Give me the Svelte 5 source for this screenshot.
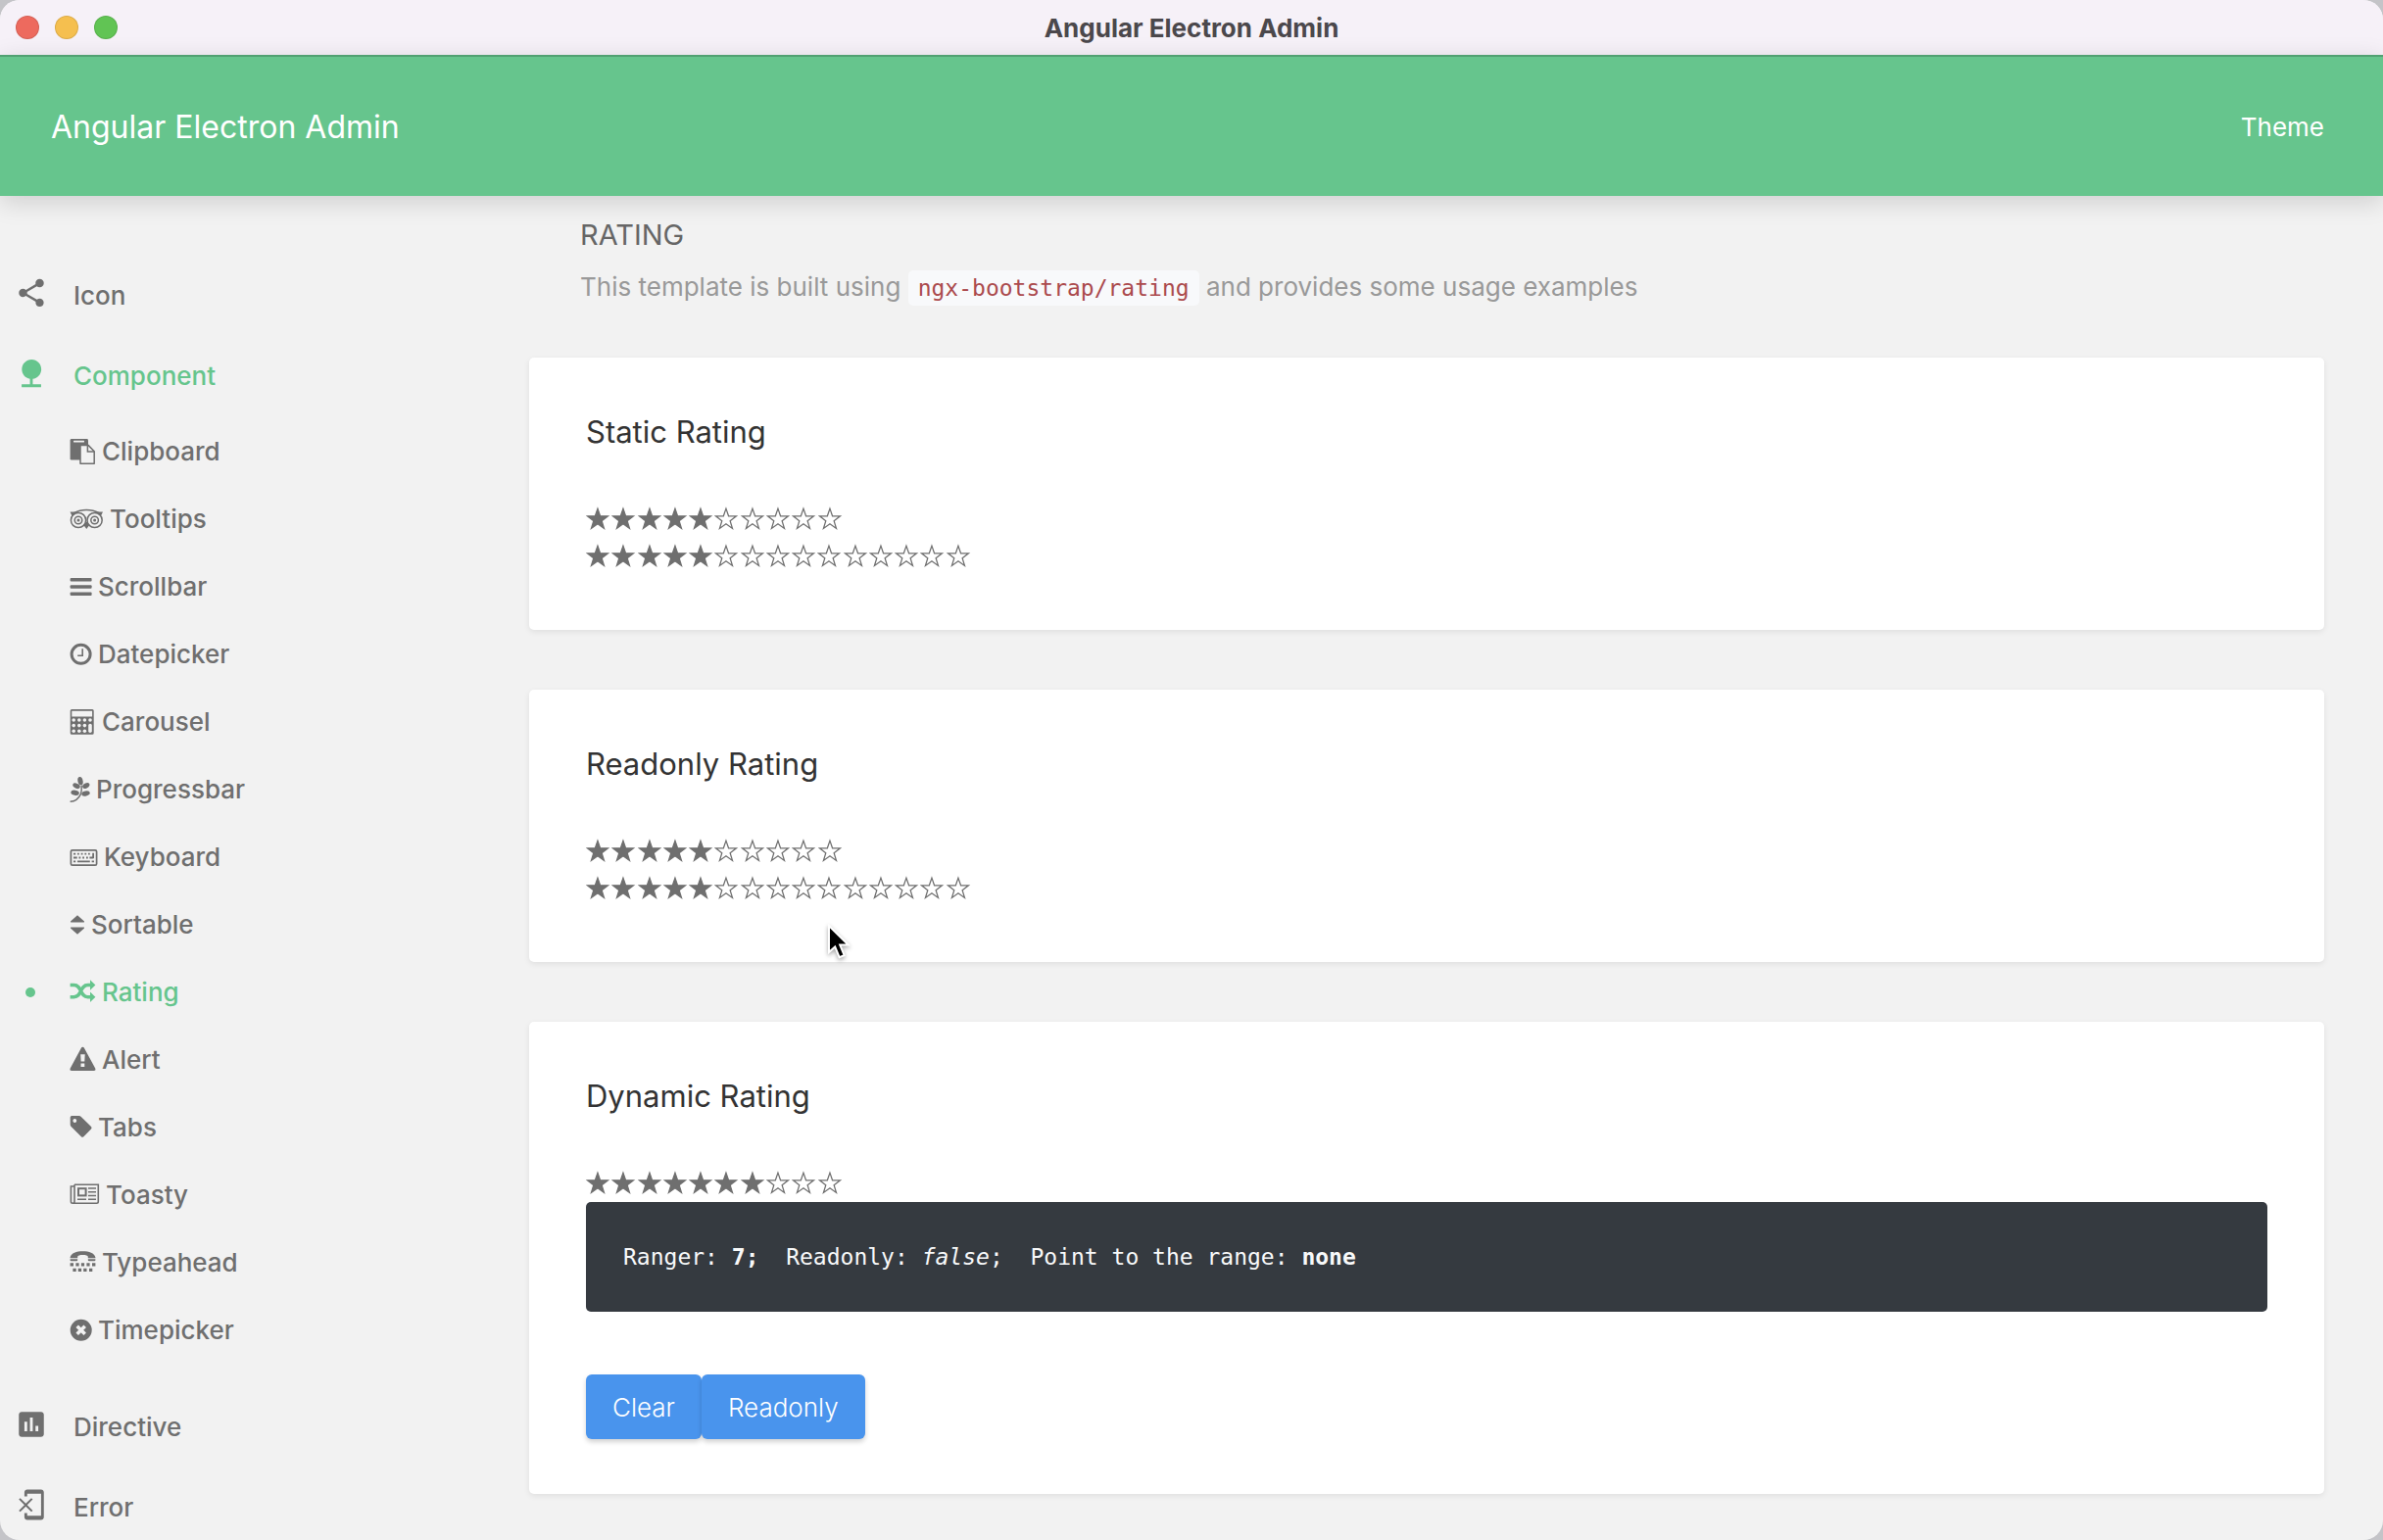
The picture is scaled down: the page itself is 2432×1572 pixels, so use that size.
<script>
    const share = 'M18 16.08c-.76 0-1.44.3-1.96.77L8.91 12.7c.05-.23.09-.46.09-.7s-.04-.47-.09-.7l7.05-4.11c.54.5 1.25.81 2.04.81 1.66 0 3-1.34 3-3s-1.34-3-3-3-3 1.34-3 3c0 .24.04.47.09.7L8.04 9.81C7.5 9.31 6.79 9 6 9c-1.66 0-3 1.34-3 3s1.34 3 3 3c.79 0 1.5-.31 2.04-.81l7.12 4.16c-.05.21-.08.43-.08.65 0 1.61 1.31 2.92 2.92 2.92s2.92-1.31 2.92-2.92-1.31-2.92-2.92-2.92z';
    const nature = 'M13 16.12c3.47-.41 6.17-3.36 6.17-6.95 0-3.87-3.13-7-7-7s-7 3.13-7 7c0 3.47 2.52 6.34 5.83 6.89V20H5v2h14v-2h-6v-3.88z';
    const assessment = 'M19 3H5c-1.1 0-2 .9-2 2v14c0 1.1.9 2 2 2h14c1.1 0 2-.9 2-2V5c0-1.1-.9-2-2-2zM9 17H7v-7h2v7zm4 0h-2V7h2v10zm4 0h-2v-4h2v4z';
    const phoneErase = 'M13 8.2l-1-1-4 4-4-4-1 1 4 4-4 4 1 1 4-4 4 4 1-1-4-4 4-4zM19 1H9c-1.1 0-2 .9-2 2v3h2V4h10v16H9v-2H7v3c0 1.1.9 2 2 2h10c1.1 0 2-.9 2-2V3c0-1.1-.9-2-2-2z';

    // width: icon advance, svg: drawing on a box 26 high
    const components = [
        { label: 'Clipboard', width: 26, svg: '<rect x=".6" y="0" width="18.4" height="21.6" rx="1.4"/><rect x="4" y="1.8" width="11" height="1.6" rx=".4" fill="#f2f2f2"/><path d="M11 6.4h8l6.2 6.3v12.6H11z" fill="#f2f2f2" stroke="currentColor" stroke-width="1.5" stroke-linejoin="round"/><path d="M18.4 6.4v6.6h6.8" fill="none" stroke="currentColor" stroke-width="1.5"/>' },
        { label: 'Tooltips', width: 34, svg: '<g fill="none" stroke="currentColor" stroke-width="1.5"><circle cx="9" cy="14" r="7.6"/><circle cx="25.6" cy="14" r="7.6"/><circle cx="9" cy="14" r="3.8"/><circle cx="25.6" cy="14" r="3.8"/><path d="M5 6.4C12 2.4 22.6 2.4 29.6 6.4"/></g><circle cx="9" cy="14" r="1.5"/><circle cx="25.6" cy="14" r="1.5"/><path d="M.5 5.5h7L2.7 10zM34 5.5h-7l4.8 4.5zM14 18.5l3.3 4.4 3.3-4.4-3.3-3z"/>' },
        { label: 'Scrollbar', width: 22, svg: '<rect x=".6" y="4" width="22" height="3.5" rx="1"/><rect x=".6" y="11.2" width="22" height="3.5" rx="1"/><rect x=".6" y="18.5" width="22" height="3.5" rx="1"/>' },
        { label: 'Datepicker', width: 22, svg: '<circle cx="11.6" cy="12.8" r="9.5" fill="none" stroke="currentColor" stroke-width="3"/><path d="M13.2 7.2v7h-5" fill="none" stroke="currentColor" stroke-width="1.6"/>' },
        { label: 'Carousel', width: 26, svg: '<path fill-rule="evenodd" d="M2.2 0h21q1.5 0 1.5 1.5v22.8q0 1.5-1.5 1.5h-21q-1.5 0-1.5-1.5V1.5Q.7 0 2.2 0zM2.3 1.7v5.8h20.8V1.7z"/><g fill="#f2f2f2"><circle cx="4.2" cy="11" r="1.8"/><circle cx="9.8" cy="11" r="1.8"/><circle cx="15.4" cy="11" r="1.8"/><circle cx="21" cy="11" r="1.8"/><circle cx="4.2" cy="16.6" r="1.8"/><circle cx="9.8" cy="16.6" r="1.8"/><circle cx="15.4" cy="16.6" r="1.8"/><circle cx="4.2" cy="22.2" r="1.8"/><circle cx="9.8" cy="22.2" r="1.8"/><circle cx="15.4" cy="22.2" r="1.8"/><rect x="19.2" y="14.8" width="3.6" height="9.2" rx="1.8"/></g>' },
        { label: 'Progressbar', width: 20, svg: '<ellipse cx="11" cy="4.2" rx="2.6" ry="4.2" transform="rotate(-12 11 4.2)"/><ellipse cx="7" cy="9.2" rx="3.9" ry="2.5" transform="rotate(24 7 9.2)"/><ellipse cx="16.8" cy="9" rx="3.9" ry="2.5" transform="rotate(-30 16.8 9)"/><ellipse cx="5.6" cy="16.2" rx="4.3" ry="2.6" transform="rotate(10 5.6 16.2)"/><ellipse cx="16.5" cy="17" rx="4.3" ry="2.5" transform="rotate(-12 16.5 17)"/><path d="M.6 25.2c5-.2 8.8-3.2 10.8-7.6 1-2.8 1-5.6.8-9" fill="none" stroke="currentColor" stroke-width="1.4"/>' },
        { label: 'Keyboard', width: 28, svg: '<rect x="1.4" y="5.8" width="26.2" height="15.4" rx="1.5" fill="none" stroke="currentColor" stroke-width="1.7"/><path fill="none" stroke="currentColor" stroke-width="1.8" d="M4 9.7h2.2M8 9.7h1.8M11.7 9.7h1.8M15.4 9.7h1.8M19 9.7h1.8M4 13.5h3.7M9.5 13.5h1.8M13.2 13.5h1.8M17 13.5h1.8M20.4 13.5H24M4 17.3h2.2M8 17.3h12.8M22.6 17.3h2.4M24.1 8.8v5.5"/>' },
        { label: 'Sortable', width: 15, svg: '<path d="M8 3.2l7 6.4q.4 1-.6 1H1.6q-1 0-.6-1zM8 22.8l7-6.4q.4-1-.6-1H1.6q-1 0-.6 1z"/>' },
        { label: 'Rating', width: 26, active: true, svg: '<g fill="none" stroke="currentColor" stroke-width="3.5"><path d="M.6 5.5h3.8c8.4 0 6 12.2 14.2 12.2H22M.6 17.7h3.8c8.4 0 6-12.2 14.2-12.2H22"/></g><path d="M21 .2l5.4 5.3-5.4 5.3zM21 12.4l5.4 5.3-5.4 5.3z"/>' },
        { label: 'Alert', width: 26, svg: '<path d="M13.4-.2q1 0 1.5.9l11.3 20.8q.9 2.5-1.5 2.5H2.2q-2.4 0-1.5-2.5L11.9.7q.5-.9 1.5-.9z"/><path d="M11.2 7.2h4.5l-.4 7.3h-3.7zM11.5 16.4h3.8v3.7h-3.8z" fill="#f2f2f2"/>' },
        { label: 'Tabs', width: 22, svg: '<path fill-rule="evenodd" d="M2.2 1h7.4q1.3 0 2.2.9l10.2 10.2q1.2 1.3 0 2.5l-7.6 7.6q-1.3 1.2-2.5 0L1.6 12Q.7 11 .7 9.8V2.5Q.7 1 2.2 1zM5.3 4.1a1.9 1.9 0 1 0 .01 0z"/>' },
        { label: 'Toasty', width: 30, svg: '<g fill="none" stroke="currentColor" stroke-width="1.6"><path d="M5 2.2h24.3v17.3q0 1.7-1.7 1.7H3.1q-1.7 0-1.7-1.7V4H5M5 2.2v17.3q0 1.7-1.9 1.7"/><path d="M19 6h8M19 9.7h8M19 13.5h8M8 17.3h9M19 17.3h8"/></g><rect x="9" y="6.2" width="7.6" height="7.2" fill="none" stroke="currentColor" stroke-width="2"/>' },
        { label: 'Typeahead', width: 26, svg: '<path d="M.6 7.6C1.5 3.2 7.2 1.3 13.5 1.3S25.5 3.2 26.4 7.6v.6h-7.6V6.8c0-1.4-2.4-1.9-5.3-1.9s-5.3.5-5.3 1.9v1.4H.6zM.6 9.2h7.6v1q0 1-1 1H1.6q-1 0-1-1zM18.8 9.2h7.6v1q0 1-1 1h-5.6q-1 0-1-1z"/><path fill="none" stroke="currentColor" stroke-width="3.2" d="M.6 14.8h3.4M6.4 14.8h3.2M11.9 14.8h3.2M17.4 14.8h3.2M23 14.8h3.4M3.4 20.4h3.3M8.8 20.4h3.3M14.2 20.4h3.3M20 20.4h3.3"/>' },
        { label: 'Timepicker', width: 22, svg: '<circle cx="11.7" cy="12.7" r="11"/><path d="M7.7 8.7l8 8M15.7 8.7l-8 8" stroke="#f2f2f2" stroke-width="3.6"/>' }
    ];

    const menu = [
        { label: 'Icon', icon: share },
        { label: 'Component', icon: nature, active: true, children: components },
        { label: 'Directive', icon: assessment },
        { label: 'Error', icon: phoneErase }
    ];

    let rate = $state(7);
    let readonly = $state(false);
    let hovered = $state(null);
</script>

{#snippet stars(value, max, select)}
    <div class="stars" class:wide={max > 10} role="group" aria-label="{value} of {max} stars">
        {#each Array(max) as _, i}
            <button type="button" class="star" aria-label="{i + 1} stars"
                disabled={!select || readonly}
                onclick={() => select(i + 1)}
                onmouseenter={() => { if (select) hovered = i + 1; }}
                onmouseleave={() => { hovered = null; }}>
                <svg viewBox="1.5 0 25 25" class:filled={i < value}>
                    <path d="M13 2l2.5 7.4h7.6L17 14.1l2.3 7.5-6.3-4.5-6.3 4.5L9 14.1 2.9 9.4h7.6z" />
                </svg>
            </button>
        {/each}
    </div>
{/snippet}

<div class="window">
    <div class="titlebar">
        <div class="lights">
            <span class="light red"></span>
            <span class="light yellow"></span>
            <span class="light green"></span>
        </div>
        <span class="window-title">Angular Electron Admin</span>
    </div>

    <header>
        <a class="brand" href="#/">Angular Electron Admin</a>
        <a class="theme" href="#/theme">Theme</a>
    </header>

    <div class="layout">
        <nav>
            {#each menu as item}
                <a class="item" class:active={item.active} href="#/{item.label.toLowerCase()}">
                    <svg viewBox="0 0 24 24"><path d={item.icon} /></svg>
                    <span>{item.label}</span>
                </a>
                {#if item.children}
                    <ul>
                        {#each item.children as child}
                            <li>
                                <a class="child" class:active={child.active} href="#/component/{child.label.toLowerCase()}">
                                    <svg viewBox="0 0 {child.width} 26" style="width: {child.width}px">{@html child.svg}</svg>
                                    <span>{child.label}</span>
                                </a>
                            </li>
                        {/each}
                    </ul>
                {/if}
            {/each}
        </nav>

        <main>
            <div class="intro">
                <h1>RATING</h1>
                <p>This template is built using <code>ngx-bootstrap/rating</code> and provides some usage examples</p>
            </div>

            <section class="card">
                <h2>Static Rating</h2>
                {@render stars(5, 10)}
                {@render stars(5, 15)}
            </section>

            <section class="card">
                <h2>Readonly Rating</h2>
                {@render stars(5, 10)}
                {@render stars(5, 15)}
            </section>

            <section class="card">
                <h2>Dynamic Rating</h2>
                {@render stars(hovered ?? rate, 10, (n) => { rate = n; })}
                <pre>Ranger: <b>{rate};</b>  Readonly: <i>{readonly}</i>;  Point to the range: <b>{hovered ?? 'none'}</b></pre>
                <div class="buttons">
                    <button type="button" class="btn" onclick={() => { rate = 0; }}>Clear</button>
                    <button type="button" class="btn" onclick={() => { readonly = !readonly; }}>Readonly</button>
                </div>
            </section>
        </main>
    </div>

    <svg class="cursor" viewBox="0 0 28 40">
        <path d="M3 2v27l6.2-5.6 4.4 10.8 5-2.1-4.4-10.5h8.6z" />
    </svg>
</div>

<style>
    :global(body) {
        margin: 0;
        background: #c4c4c8;
    }
    .window {
        position: relative;
        min-height: 100vh;
        box-sizing: border-box;
        overflow: hidden;
        border-radius: 20px;
        background: #f2f2f2;
        color: #6f6f6f;
        font-family: Inter, "Liberation Sans", sans-serif;
        font-size: 26px;
    }
    a {
        color: inherit;
        text-decoration: none;
    }
    .titlebar {
        display: grid;
        grid-template-columns: 1fr auto 1fr;
        align-items: center;
        height: 56px;
        background: #f6f1f8;
    }
    .lights {
        display: flex;
        gap: 16px;
        padding-left: 16px;
    }
    .light {
        width: 24px;
        height: 24px;
        box-sizing: border-box;
        border-radius: 50%;
        border: 1px solid rgba(0, 0, 0, 0.1);
    }
    .red { background: #ed6a5e; }
    .yellow { background: #f5bf4f; }
    .green { background: #61c454; }
    .window-title {
        color: #4b484c;
        font-weight: 700;
    }
    header {
        position: relative;
        display: flex;
        justify-content: space-between;
        align-items: center;
        height: 144px;
        box-sizing: border-box;
        padding: 0 60px 0 52px;
        border-top: 2px solid #51a172;
        background: #66c58d;
        color: #fff;
        box-shadow: 0 6px 24px rgba(0, 0, 0, 0.15);
    }
    .brand {
        font-size: 32px;
    }
    .layout {
        display: flex;
    }
    nav {
        flex: 0 0 540px;
        padding-top: 74px;
        font-weight: 500;
    }
    .item {
        display: flex;
        align-items: center;
        gap: 26px;
        height: 54px;
        margin-bottom: 28px;
        padding-left: 15px;
    }
    .item:last-child {
        margin-bottom: 0;
    }
    .item svg {
        width: 34px;
        height: 34px;
        margin-bottom: 4px;
        fill: currentColor;
    }
    .active {
        color: #66c58d;
    }
    ul {
        margin: -12px 0 37px;
        padding: 0;
        list-style: none;
    }
    .child {
        display: flex;
        align-items: center;
        height: 69px;
    }
    .child::before {
        content: "";
        width: 10px;
        height: 10px;
        margin: 0 35px 0 26px;
        border-radius: 50%;
    }
    .child.active::before {
        background: #66c58d;
    }
    .child svg {
        height: 26px;
        margin-right: 7px;
        overflow: visible;
        fill: currentColor;
    }
    main {
        flex: 1;
        padding: 22px 60px 0 0;
    }
    .intro {
        padding-left: 52px;
        margin-bottom: 52px;
    }
    h1 {
        margin: 0 0 16px;
        color: #666;
        font-size: 29px;
        font-weight: 400;
        line-height: 36px;
    }
    p {
        margin: 0;
        color: #999;
        line-height: 38px;
    }
    code, pre {
        font-family: "DejaVu Sans Mono", monospace;
        font-size: 23px;
    }
    code {
        padding: 5px 10px;
        border-radius: 5px;
        background: #f8f9fb;
        color: #ab4a4d;
    }
    .card {
        margin-bottom: 61px;
        padding: 57px 58px 56px;
        border-radius: 5px;
        background: #fff;
        box-shadow: 0 2px 6px rgba(0, 0, 0, 0.08);
    }
    .card:last-child {
        margin-bottom: 0;
    }
    h2 {
        margin: 0 0 51px;
        color: #333;
        font-size: 31px;
        font-weight: 400;
        line-height: 38px;
    }
    .stars {
        display: flex;
        width: 263px;
        height: 38px;
    }
    .stars.wide {
        width: 394px;
    }
    .star {
        flex: 1;
        display: flex;
        align-items: center;
        padding: 0;
        border: 0;
        background: none;
    }
    .star svg {
        width: 26px;
        height: 26px;
        fill: none;
        stroke: #6f6f6f;
        stroke-width: 1.2;
    }
    .star svg.filled {
        fill: #6f6f6f;
    }
    pre {
        margin: 0 0 64px;
        padding: 38px;
        border-radius: 5px;
        background: #353a40;
        color: #f8f9fa;
        line-height: 36px;
    }
    .buttons {
        display: flex;
    }
    .btn {
        height: 66px;
        padding: 0 27px;
        border: 0;
        border-radius: 6px;
        background: #4994ed;
        color: #fff;
        font-family: inherit;
        font-size: 26px;
        font-weight: 300;
        box-shadow: 0 3px 5px rgba(0, 0, 0, 0.18);
    }
    .cursor {
        position: absolute;
        left: 843px;
        top: 943px;
        width: 28px;
        height: 40px;
        fill: #000;
        stroke: #fff;
        stroke-width: 2;
        filter: drop-shadow(0 2px 2px rgba(0, 0, 0, 0.35));
    }
</style>
